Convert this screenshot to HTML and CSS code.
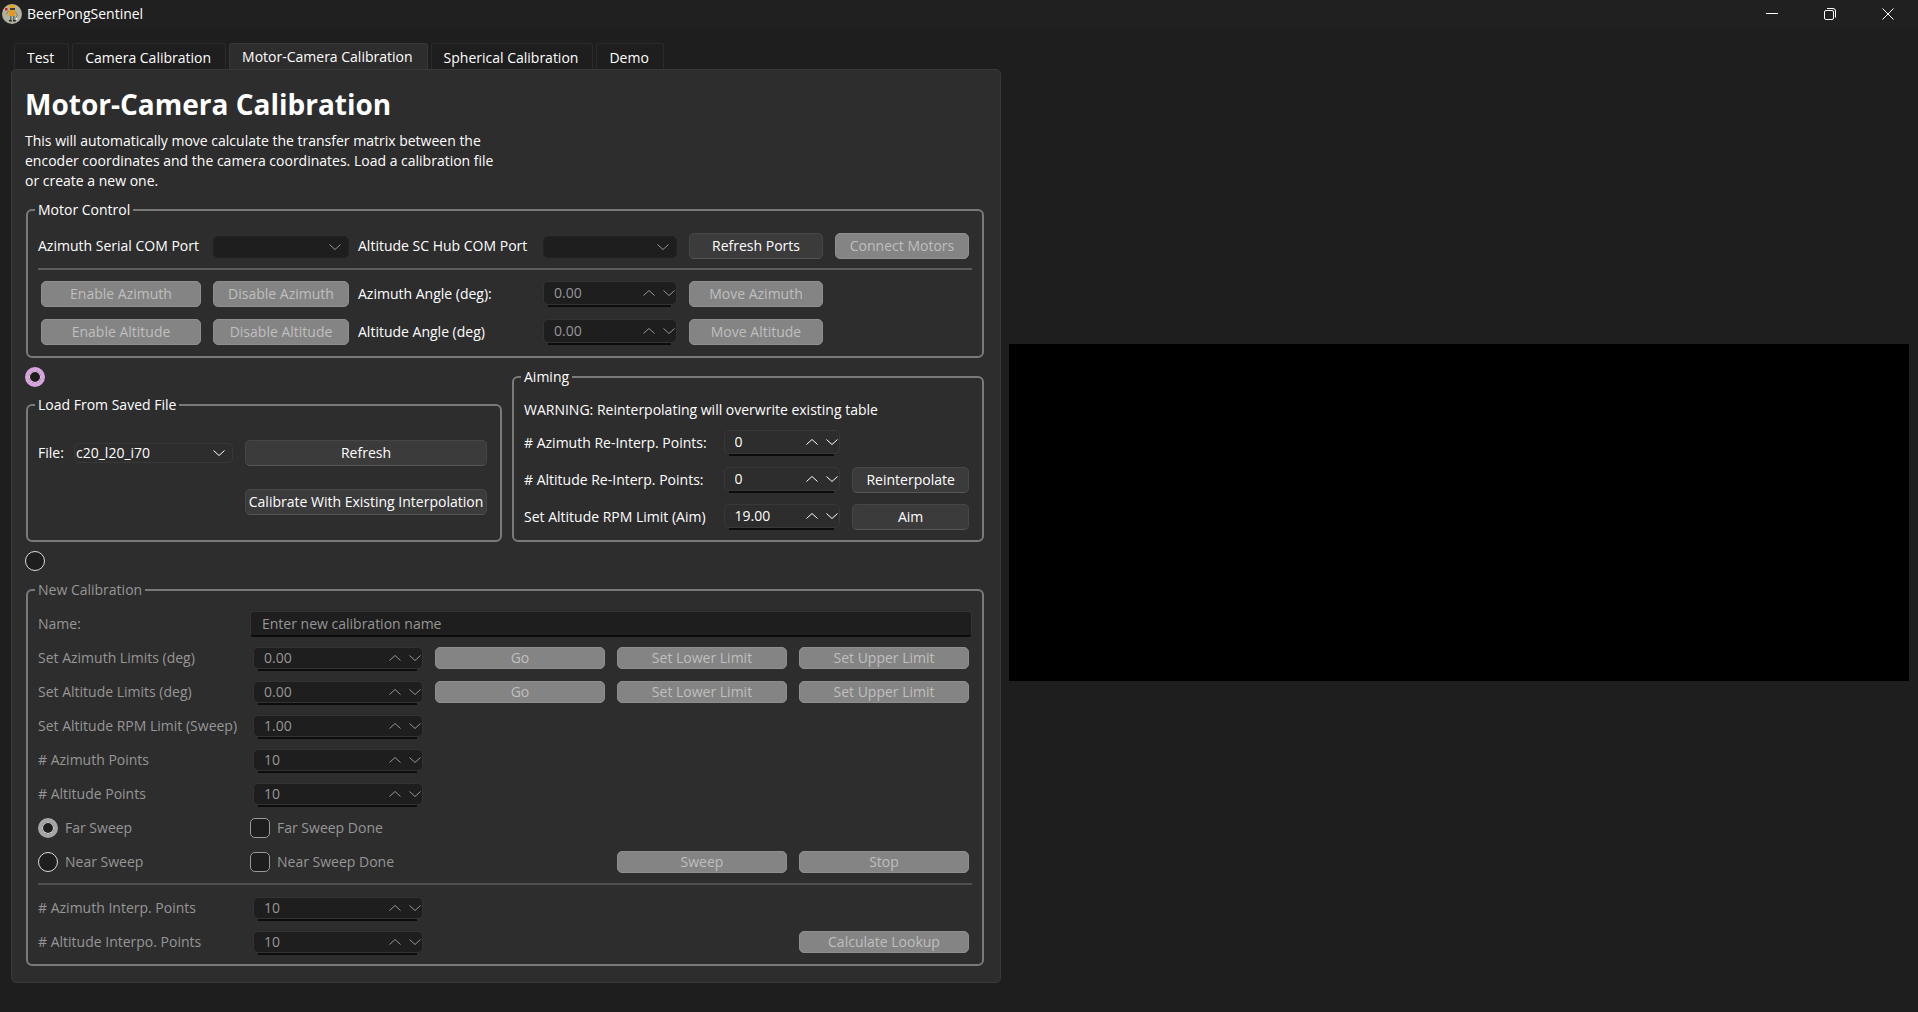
FILE: index.html
```
<!DOCTYPE html>
<html lang="en">
<head>
  <meta charset="UTF-8" />
  <meta name="viewport" content="width=device-width, initial-scale=1" />
  <title>BeerPongSentinel</title>
  <link rel="stylesheet" href="styles.css">
</head>
<body>
  <!-- shared arrow shapes -->
  <svg class="defs" aria-hidden="true">
    <symbol id="up" viewBox="0 0 12 8"><path d="M0.5 6.5 L6 1.5 L11.5 6.5" /></symbol>
    <symbol id="down" viewBox="0 0 12 8"><path d="M0.5 1.5 L6 6.5 L11.5 1.5" /></symbol>
  </svg>

  <header class="titlebar">
    <svg class="app-icon" viewBox="0 0 20 20" aria-hidden="true">
      <circle cx="10" cy="10" r="10" fill="#b4b29f" />
      <path d="M6.5 7 L4 10.5 M13 7.5 L15.5 10.5 L14 13.5" stroke="#77796b" stroke-width="1" fill="none" />
      <rect x="7" y="1" width="6" height="3" rx="1" fill="#e9a51c" />
      <rect x="8" y="4" width="5" height="2" fill="#3a3a30" />
      <rect x="7" y="6" width="6" height="6" rx="1" fill="#e79a12" />
      <rect x="8" y="12" width="1.5" height="4" fill="#5b6a68" />
      <rect x="11" y="12" width="1.5" height="4" fill="#5b6a68" />
      <path d="M7 16 h2.8 v1.5 H7 z M11 16 h2.8 v1.5 H11 z" fill="#1c2a30" />
      <rect x="3" y="4" width="2.5" height="2.5" fill="#d3221c" />
      <rect x="14" y="14" width="1.5" height="1.5" fill="#f4f4ee" />
    </svg>
    <span class="title">BeerPongSentinel</span>
    <div class="window-buttons">
      <button type="button" aria-label="Minimize">
        <svg viewBox="0 0 12 12"><path d="M0 5.5 H12" /></svg>
      </button>
      <button type="button" aria-label="Restore">
        <svg viewBox="0 0 12 12"><rect x="0.5" y="2.5" width="9" height="9" rx="1.5" /><path d="M3 0.5 H9 Q11.5 0.5 11.5 3 V9.5" /></svg>
      </button>
      <button type="button" aria-label="Close">
        <svg viewBox="0 0 12 12"><path d="M0.5 0.5 L11.5 11.5 M11.5 0.5 L0.5 11.5" /></svg>
      </button>
    </div>
  </header>

  <main class="window">
    <div class="left">
      <div class="tabs" role="tablist">
        <button type="button" role="tab">Test</button>
        <button type="button" role="tab">Camera Calibration</button>
        <button type="button" role="tab" aria-selected="true" class="selected">Motor-Camera Calibration</button>
        <button type="button" role="tab">Spherical Calibration</button>
        <button type="button" role="tab">Demo</button>
      </div>

      <section class="panel" role="tabpanel">
        <h1>Motor-Camera Calibration</h1>
        <p class="intro">This will automatically move calculate the transfer matrix between the encoder coordinates and the camera coordinates. Load a calibration file or create a new one.</p>

        <fieldset class="group">
          <legend>Motor Control</legend>
          <div class="grid motor-grid ports">
            <label for="azPort">Azimuth Serial COM Port</label>
            <div class="combo"><select id="azPort" disabled></select><svg><use href="#down" /></svg></div>
            <label for="altPort">Altitude SC Hub COM Port</label>
            <div class="combo"><select id="altPort" disabled></select><svg><use href="#down" /></svg></div>
            <button type="button">Refresh Ports</button>
            <button type="button" disabled>Connect Motors</button>
          </div>
          <hr>
          <div class="grid motor-grid angles">
            <button type="button" disabled>Enable Azimuth</button>
            <button type="button" disabled>Disable Azimuth</button>
            <label for="azAngle">Azimuth Angle (deg):</label>
            <div class="spin off">
              <input type="number" id="azAngle" value="0.00" step="0.01" disabled />
              <button type="button" aria-label="Increase" disabled><svg><use href="#up" /></svg></button>
              <button type="button" aria-label="Decrease" disabled><svg><use href="#down" /></svg></button>
            </div>
            <button type="button" disabled>Move Azimuth</button>
            <button type="button" class="first" disabled>Enable Altitude</button>
            <button type="button" disabled>Disable Altitude</button>
            <label for="altAngle">Altitude Angle (deg)</label>
            <div class="spin off">
              <input type="number" id="altAngle" value="0.00" step="0.01" disabled />
              <button type="button" aria-label="Increase" disabled><svg><use href="#up" /></svg></button>
              <button type="button" aria-label="Decrease" disabled><svg><use href="#down" /></svg></button>
            </div>
            <button type="button" disabled>Move Altitude</button>
          </div>
        </fieldset>

        <div class="saved-row">
          <div class="saved">
            <input type="radio" name="mode" aria-label="Load from saved file" checked />
            <fieldset class="group">
              <legend>Load From Saved File</legend>
              <div class="grid load-grid">
                <label for="file">File:</label>
                <div class="combo on"><select id="file"><option>c20_l20_i70</option></select><svg><use href="#down" /></svg></div>
                <button type="button">Refresh</button>
                <button type="button" class="calibrate">Calibrate With Existing Interpolation</button>
              </div>
            </fieldset>
          </div>

          <fieldset class="group">
            <legend>Aiming</legend>
            <p class="warning">WARNING: Reinterpolating will overwrite existing table</p>
            <div class="grid aim-grid">
              <label for="azRe"># Azimuth Re-Interp. Points:</label>
              <div class="spin">
                <input type="number" id="azRe" value="0" />
                <button type="button" aria-label="Increase"><svg><use href="#up" /></svg></button>
                <button type="button" aria-label="Decrease"><svg><use href="#down" /></svg></button>
              </div>
              <label for="altRe" class="first"># Altitude Re-Interp. Points:</label>
              <div class="spin">
                <input type="number" id="altRe" value="0" />
                <button type="button" aria-label="Increase"><svg><use href="#up" /></svg></button>
                <button type="button" aria-label="Decrease"><svg><use href="#down" /></svg></button>
              </div>
              <button type="button">Reinterpolate</button>
              <label for="rpmAim">Set Altitude RPM Limit (Aim)</label>
              <div class="spin">
                <input type="number" id="rpmAim" value="19.00" step="0.01" />
                <button type="button" aria-label="Increase"><svg><use href="#up" /></svg></button>
                <button type="button" aria-label="Decrease"><svg><use href="#down" /></svg></button>
              </div>
              <button type="button">Aim</button>
            </div>
          </fieldset>
        </div>

        <input type="radio" name="mode" aria-label="New calibration" />

        <fieldset class="group new" disabled>
          <legend>New Calibration</legend>
          <div class="grid new-grid name-row">
            <label for="name">Name:</label>
            <input type="text" id="name" placeholder="Enter new calibration name" />
          </div>
          <div class="grid new-grid">
            <label for="azLimit">Set Azimuth Limits (deg)</label>
            <div class="spin off">
              <input type="number" id="azLimit" value="0.00" step="0.01" />
              <button type="button" aria-label="Increase"><svg><use href="#up" /></svg></button>
              <button type="button" aria-label="Decrease"><svg><use href="#down" /></svg></button>
            </div>
            <button type="button">Go</button>
            <button type="button">Set Lower Limit</button>
            <button type="button">Set Upper Limit</button>

            <label for="altLimit">Set Altitude Limits (deg)</label>
            <div class="spin off">
              <input type="number" id="altLimit" value="0.00" step="0.01" />
              <button type="button" aria-label="Increase"><svg><use href="#up" /></svg></button>
              <button type="button" aria-label="Decrease"><svg><use href="#down" /></svg></button>
            </div>
            <button type="button">Go</button>
            <button type="button">Set Lower Limit</button>
            <button type="button">Set Upper Limit</button>

            <label for="rpmSweep">Set Altitude RPM Limit (Sweep)</label>
            <div class="spin off">
              <input type="number" id="rpmSweep" value="1.00" step="0.01" />
              <button type="button" aria-label="Increase"><svg><use href="#up" /></svg></button>
              <button type="button" aria-label="Decrease"><svg><use href="#down" /></svg></button>
            </div>

            <label for="azPoints" class="first"># Azimuth Points</label>
            <div class="spin off">
              <input type="number" id="azPoints" value="10" />
              <button type="button" aria-label="Increase"><svg><use href="#up" /></svg></button>
              <button type="button" aria-label="Decrease"><svg><use href="#down" /></svg></button>
            </div>

            <label for="altPoints" class="first"># Altitude Points</label>
            <div class="spin off">
              <input type="number" id="altPoints" value="10" />
              <button type="button" aria-label="Increase"><svg><use href="#up" /></svg></button>
              <button type="button" aria-label="Decrease"><svg><use href="#down" /></svg></button>
            </div>

            <label class="option first"><input type="radio" name="sweep" checked />Far Sweep</label>
            <label class="option"><input type="checkbox" />Far Sweep Done</label>

            <label class="option first"><input type="radio" name="sweep" />Near Sweep</label>
            <label class="option"><input type="checkbox" />Near Sweep Done</label>
            <button type="button" class="sweep">Sweep</button>
            <button type="button">Stop</button>
          </div>
          <hr>
          <div class="grid new-grid interp">
            <label for="azInterp"># Azimuth Interp. Points</label>
            <div class="spin off">
              <input type="number" id="azInterp" value="10" />
              <button type="button" aria-label="Increase"><svg><use href="#up" /></svg></button>
              <button type="button" aria-label="Decrease"><svg><use href="#down" /></svg></button>
            </div>
            <label for="altInterp" class="first"># Altitude Interpo. Points</label>
            <div class="spin off">
              <input type="number" id="altInterp" value="10" />
              <button type="button" aria-label="Increase"><svg><use href="#up" /></svg></button>
              <button type="button" aria-label="Decrease"><svg><use href="#down" /></svg></button>
            </div>
            <button type="button" class="lookup">Calculate Lookup</button>
          </div>
        </fieldset>
      </section>
    </div>

    <!-- camera feed, black until a camera is connected -->
    <div class="video"></div>
  </main>
</body>
</html>
```

FILE: styles.css
```
* {
  box-sizing: border-box;
}
body {
  margin: 0;
  min-height: 100vh;
  background: #1e1e1e;
  color: #fff;
  font-family: "Open Sans", "Noto Sans", sans-serif;
  font-size: 14px;
  line-height: 20px;
}
button, input, select {
  font: inherit;
  color: inherit;
  margin: 0;
}
svg {
  fill: none;
  stroke: currentColor;
}
.defs {
  display: none;
}

/* title bar */
.titlebar {
  display: flex;
  align-items: center;
  height: 28px;
  padding-left: 2px;
  background: #202020;
}
.app-icon {
  width: 20px;
  height: 20px;
  stroke: none;
}
.title {
  margin-left: 5px;
}
.window-buttons {
  display: flex;
  margin-left: auto;
  padding-right: 1px;
}
.window-buttons button {
  width: 58px;
  height: 28px;
  padding: 0;
  border: none;
  background: none;
}
.window-buttons svg {
  display: block;
  width: 12px;
  height: 12px;
  margin: auto;
}

/* page */
.window {
  display: grid;
  grid-template-columns: 11fr 10fr;
  gap: 8px;
  padding: 13px 9px 29px 11px;
}
.video {
  align-self: center;
  aspect-ratio: 900 / 337;
  background: #000;
}

/* tabs */
.tabs {
  display: flex;
  gap: 3px;
  padding: 2px 3px 0;
}
.tabs button {
  height: 26px;
  padding: 2px 14px 0 12px;
  border: 1px solid #2b2b2b;
  border-bottom: none;
  border-radius: 3px 3px 0 0;
  background: #1e1e1e;
  line-height: 20px;
  white-space: nowrap;
}
.tabs .selected {
  padding-top: 0;
  border-color: #383838;
  background: #2d2d2d;
}
.panel {
  display: flex;
  flex-direction: column;
  gap: 9px;
  padding: 16px 16px 16px 13px;
  border: 1px solid #383838;
  border-radius: 5px;
  background: #2d2d2d;
}
h1 {
  margin: 0;
  font-size: 28px;
  line-height: 36px;
}
p {
  margin: 0;
}
.intro {
  max-width: 480px;
}

/* group boxes */
.group {
  min-width: 0;
  margin: 0 0 0 1px;
  padding: 0 10px;
  border: 2px solid #7a7a7a;
  border-radius: 6px;
}
.group legend {
  margin-left: -3px;
  padding: 0 3px;
}
.grid {
  display: grid;
  column-gap: 6px;
  align-items: center;
}
.grid label {
  white-space: nowrap;
}
.first {
  grid-column: 1;
}
hr {
  height: 2px;
  margin: 0;
  border: none;
  background: #5c5c5c;
}

/* push buttons */
.grid > button {
  height: 26px;
  margin: 0 3px;
  padding: 0;
  border: 1px solid #464646;
  border-bottom-color: #565656;
  border-radius: 5px;
  background: #3b3b3b;
  line-height: 20px;
  white-space: nowrap;
}
.grid > button:disabled {
  border-color: #8f8f8f;
  background: #848484;
  color: #bfbfbf;
}

/* drop-downs */
.combo {
  display: grid;
  align-items: center;
  height: 20px;
  margin: 0 3px;
  color: #969696;
}
.combo select {
  grid-area: 1 / 1;
  width: 100%;
  height: 100%;
  padding: 0 24px 0 1px;
  appearance: none;
  border: 1px solid #222;
  border-radius: 5px;
  background: #1e1e1e;
  opacity: 1;
}
.combo svg {
  grid-area: 1 / 1;
  justify-self: end;
  width: 12px;
  height: 8px;
  margin-right: 8px;
  pointer-events: none;
}
.combo.on {
  color: #fff;
}
.combo.on select {
  border-color: #383838;
  background: #2d2d2d;
  line-height: 18px;
}

/* spin boxes */
.spin {
  position: relative;
  display: flex;
  align-items: center;
  gap: 8px;
  align-self: start;
  min-width: 0;
  height: 24px;
  margin: 0 3px;
  padding: 0 1px 0 10px;
  border: 1px solid #383838;
  border-radius: 5px;
}
.spin::after {
  content: "";
  position: absolute;
  left: 4px;
  right: 5px;
  bottom: -3px;
  height: 2px;
  background: #0c0c0c;
}
.spin input {
  flex: 1;
  width: 0;
  min-width: 0;
  padding: 0;
  border: none;
  background: none;
  line-height: 20px;
  appearance: textfield;
}
.spin input::-webkit-inner-spin-button {
  display: none;
}
.spin button {
  flex: none;
  width: 12px;
  height: 8px;
  padding: 0;
  border: none;
  background: none;
}
.spin svg {
  display: block;
  width: 12px;
  height: 8px;
}
.spin.off {
  background: #1e1e1e;
  border-color: #333;
  color: #969696;
}

/* radios and tick boxes */
input[type="radio"],
input[type="checkbox"] {
  flex: none;
  width: 20px;
  height: 20px;
  appearance: none;
  border: 1px solid #dcdcdc;
  border-radius: 50%;
  background: #1e1e1e;
}
input[type="checkbox"] {
  border-color: #999;
  border-radius: 5px;
}
input[type="radio"]:checked {
  border: 4px solid #d8a3df;
  box-shadow: inset 0 0 0 1px #efd9f2;
}
input[type="radio"]:checked:disabled {
  border-color: #a6a6a6;
  box-shadow: inset 0 0 0 1px #e0e0e0;
}
.option {
  display: flex;
  align-items: center;
  gap: 7px;
  height: 22px;
}

/* motor control */
.motor-grid {
  grid-template-columns: 166fr 142fr 176fr 140fr 140fr 140fr;
  row-gap: 12px;
}
.ports {
  padding: 13px 0 9px;
}
.angles {
  padding: 11px 0;
}

/* saved file and aiming */
.saved-row {
  display: grid;
  grid-template-columns: 477fr 473fr;
  gap: 9px;
}
.saved {
  display: flex;
  flex-direction: column;
  gap: 8px;
}
.saved .group {
  flex: 1;
}
.load-grid {
  grid-template-columns: 27px 165fr 248fr;
  row-gap: 23px;
  padding-top: 25px;
}
.calibrate {
  grid-column: 3;
}
.warning {
  margin: 13px 0 10px;
}
.aim-grid {
  grid-template-columns: 191fr 123fr 123fr;
  row-gap: 11px;
  grid-auto-rows: 26px;
  padding-bottom: 10px;
}

/* new calibration */
.new {
  color: #969696;
}
.new-grid {
  grid-template-columns: 206fr repeat(4, 176fr);
  grid-auto-rows: 22px;
  row-gap: 12px;
}
.new-grid > button,
.new-grid .spin {
  height: 22px;
}
.name-row {
  grid-auto-rows: 26px;
  padding: 11px 0 10px;
}
.name-row input {
  grid-column: 2 / -1;
  height: 26px;
  padding: 0 11px;
  border: 1px solid #333;
  border-bottom: 2px solid #0c0c0c;
  border-radius: 4px;
  background: #1e1e1e;
}
.name-row input::placeholder {
  color: #969696;
  opacity: 1;
}
.new hr {
  margin: 10px 0 12px;
  background: #505050;
}
.sweep {
  grid-column: 4;
}
.lookup {
  grid-column: 5;
}
.interp {
  padding-bottom: 11px;
}
```
